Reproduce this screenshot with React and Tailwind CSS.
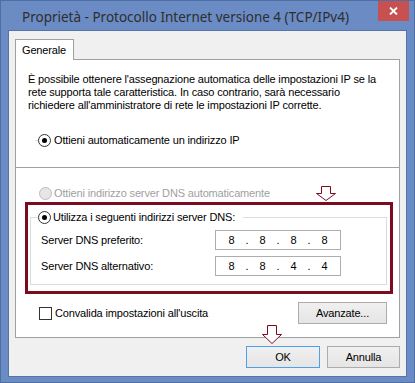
import { Fragment } from "react";

const FONT = "font-['Liberation_Sans',Arial,sans-serif]";

const Radio = ({ checked, disabled }) => (
    <span
        className={`w-[13px] h-[13px] rounded-full border flex items-center justify-center shrink-0 ${disabled ? "border-[#bcbcbc] bg-[#e6e6e6]" : "border-[#333333] bg-white"}`}
    >
        {checked && <span className="w-[5px] h-[5px] rounded-full bg-black" />}
    </span>
);

const IpBox = ({ parts }) => (
    <div className="w-[126px] h-[20px] border border-[#abadb3] bg-white flex items-center tracking-normal">
        {parts.map((p, i) => (
            <Fragment key={i}>
                <span className="w-[31px] text-center">{p}</span>
                {i < 3 && <span className="w-0 flex justify-center">.</span>}
            </Fragment>
        ))}
    </div>
);

const Arrow = ({ h, head, className }) => (
    <svg width="20" height={h} viewBox={`0 0 20 ${h}`} className={className}>
        <polygon
            points={`5.5,0.5 14.5,0.5 14.5,${head} 19.5,${head} 10,${h - 0.5} 0.5,${head} 5.5,${head}`}
            fill="white"
            stroke="#7b0c1f"
            strokeWidth="1"
        />
    </svg>
);

const Button = ({ children, className }) => (
    <button
        type="button"
        className={`h-[22px] border bg-gradient-to-b from-[#f0f0f0] to-[#e5e5e5] text-black flex items-center justify-center ${className}`}
    >
        {children}
    </button>
);

export default function App() {
    return (
        <div className={`relative w-[415px] h-[383px] border border-[#4f6fa3] bg-[#6a8bc3] flex flex-col text-[11px] tracking-[-0.15px] text-black ${FONT}`}>
            {/* barra del titolo */}
            <div className="h-[29px] flex items-start shrink-0">
                <div className="pl-[21px] mt-[6px] font-['Noto_Sans',sans-serif] text-[13.5px] tracking-normal leading-[20px] text-[#2e2e2e] whitespace-nowrap">
                    Proprietà - Protocollo Internet versione 4 (TCP/IPv4)
                </div>
                <div className="ml-auto mr-[5px] w-[31px] h-[20px] bg-[#c75050] flex items-center justify-center">
                    <svg width="9" height="8" viewBox="0 0 9 8">
                        <path d="M1 0.5 L8 7.5 M8 0.5 L1 7.5" stroke="white" strokeWidth="1.8" />
                    </svg>
                </div>
            </div>

            {/* area interna */}
            <div className="mx-[7px] mb-[5px] flex-1 border border-[#5575a8] bg-[#f0f0f0] pt-[8px] px-[6px] flex flex-col">
                <div className="relative z-10 -mb-px w-[59px] h-[21px] bg-white border border-b-0 border-[#a0a0a0] flex items-center pl-[6px]">
                    Generale
                </div>

                <div className="h-[279px] border border-[#a0a0a0] bg-white flex flex-col">
                    <p className="mt-[13px] pl-[12px] leading-[13px] whitespace-nowrap">
                        È possibile ottenere l'assegnazione automatica delle impostazioni IP se la
                        <br />
                        rete supporta tale caratteristica. In caso contrario, sarà necessario
                        <br />
                        richiedere all'amministratore di rete le impostazioni IP corrette.
                    </p>

                    <div className="mt-[22px] h-[13px] flex items-center">
                        <span className="ml-[19px] w-[3px] h-px bg-[#dcdcdc]" />
                        <Radio checked />
                        <span className="ml-[3px] leading-[13px]">Ottieni automaticamente un indirizzo IP</span>
                    </div>

                    <div className="mt-[20px] h-px bg-[#a0a0a0]" />

                    <div className="mt-[19px] h-[13px] flex items-center pl-[23px]">
                        <Radio disabled />
                        <span className="ml-[2px] leading-[13px] text-[#a0a0a0]">
                            Ottieni indirizzo server DNS automaticamente
                        </span>
                    </div>

                    {/* riquadro rosso */}
                    <div className="mt-[2px] ml-[9px] w-[368px] h-[92px] border-[3px] border-[#7b0c1f] pt-[12px] pl-[2px]">
                        <div className="w-[357px] h-[68px] border border-[#dcdcdc] flex flex-col">
                            <div className="-mt-[7px] ml-[7px] self-start h-[13px] flex items-center bg-white pr-[8px]">
                                <Radio checked />
                                <span className="ml-[2px] leading-[13px]">Utilizza i seguenti indirizzi server DNS:</span>
                            </div>
                            <div className="mt-[6px] flex items-center pl-[10px]">
                                <span className="w-[174px]">Server DNS preferito:</span>
                                <IpBox parts={["8", "8", "8", "8"]} />
                            </div>
                            <div className="mt-[6px] flex items-center pl-[10px]">
                                <span className="w-[174px]">Server DNS alternativo:</span>
                                <IpBox parts={["8", "8", "4", "4"]} />
                            </div>
                        </div>
                    </div>

                    <div className="mt-[8px] flex items-center pl-[23px] pr-[12px]">
                        <span className="w-[13px] h-[13px] border border-[#333333] bg-white shrink-0" />
                        <span className="ml-[3px]">Convalida impostazioni all'uscita</span>
                        <Button className="ml-auto w-[89px] border-[#acacac]">Avanzate...</Button>
                    </div>
                </div>

                <div className="mt-[8px] flex justify-end gap-[7px]">
                    <Button className="w-[74px] border-[#4fa0e6]">OK</Button>
                    <Button className="w-[73px] border-[#acacac]">Annulla</Button>
                </div>
            </div>

            {/* frecce */}
            <Arrow h={15} head={7.5} className="absolute left-[315px] top-[185px]" />
            <Arrow h={19} head={9.5} className="absolute left-[261px] top-[324px]" />
        </div>
    );
}
